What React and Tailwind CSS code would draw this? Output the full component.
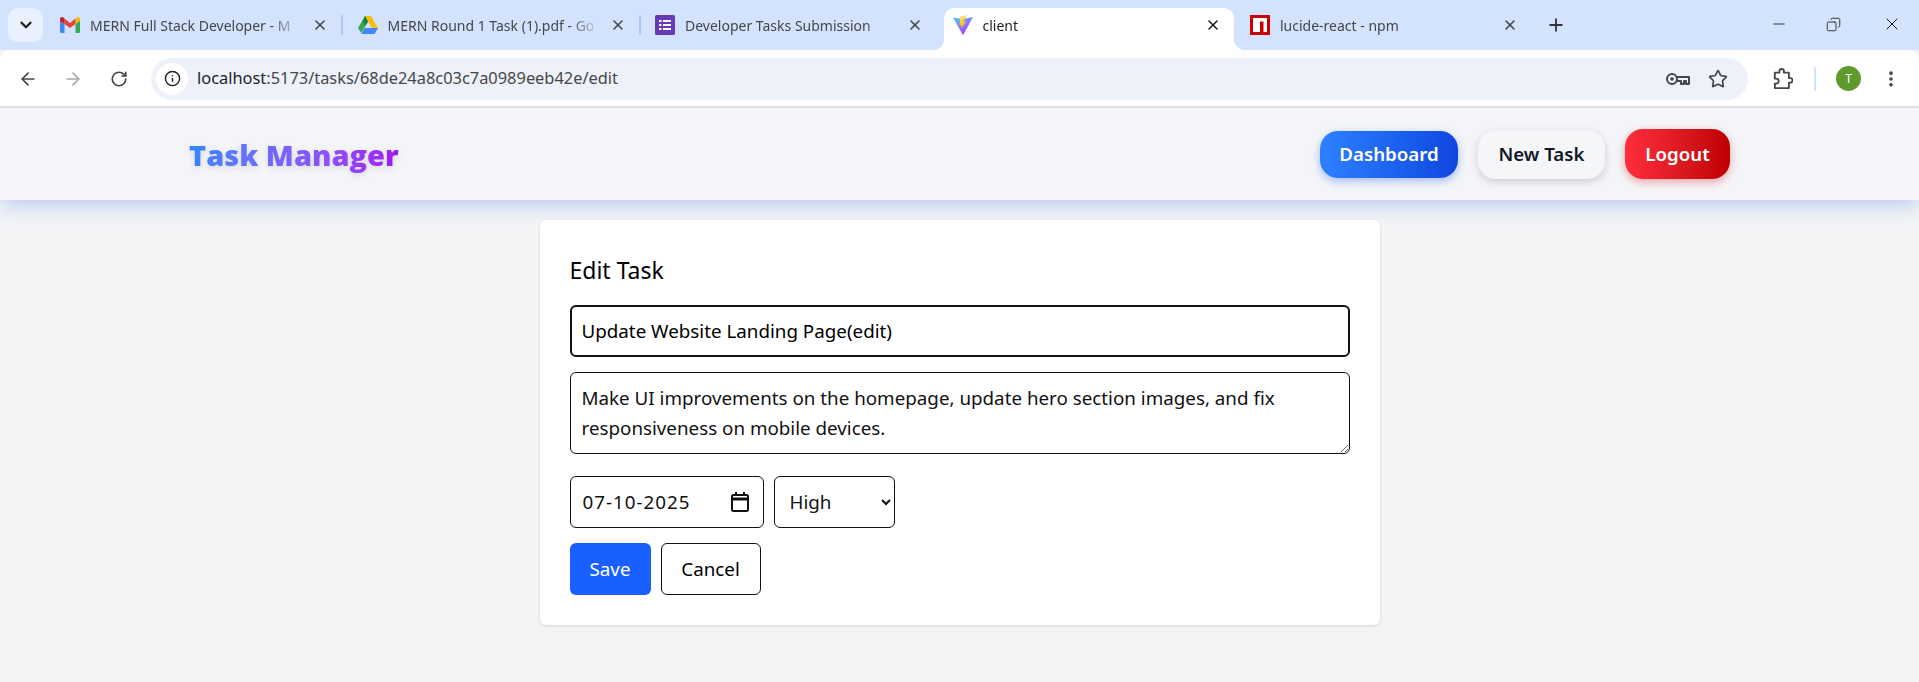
import React from 'react';
import { ArrowLeft, ArrowRight, RotateCw, Info, Star, EllipsisVertical, ChevronDown, X, Plus, Minus, Copy } from 'lucide-react';

const GmailIcon = () => (
  <svg width="20" height="16" viewBox="0 0 20 16">
    <path d="M0 3v11.5A1.5 1.5 0 0 0 1.500 16H4.500V7z" fill="#4285f4" />
    <path d="M20 3v11.5a1.500 1.500 0 0 1-1.500 1.500h-3V7z" fill="#34a853" />
    <path d="M15.500 1.500V7L20 3.800V2c0-1.700-2-2.700-3.300-1.600z" fill="#fbbc04" />
    <path d="M4.500 7V1.500L10 6l5.500-4.500V7L10 11z" fill="#ea4335" />
    <path d="M0 2v1.800L4.500 7V1.500L3.300.4C2 -.7 0 .3 0 2z" fill="#c5221f" />
  </svg>
);

const DriveIcon = () => (
  <svg width="20" height="18" viewBox="0 0 20 18">
    <path d="M7 0h6l7 12h-6z" fill="#fbbc04" />
    <path d="M7 0l3 5.500L3.300 17 0 12z" fill="#34a853" />
    <path d="M6.500 12H20l-3 5.300a1.500 1.500 0 0 1-1 .7H3.300z" fill="#4285f4" />
    <path d="M7 0l3 5.500L7.500 9.800 5 5z" fill="#188038" />
  </svg>
);

const FormsIcon = () => (
  <svg width="20" height="20" viewBox="0 0 20 20">
    <rect width="20" height="20" rx="1.500" fill="#673ab7" />
    <g fill="#fff">
      <rect x="4" y="5" width="2.500" height="2" />
      <rect x="8" y="5" width="8" height="2" />
      <rect x="4" y="9" width="2.500" height="2" />
      <rect x="8" y="9" width="8" height="2" />
      <rect x="4" y="13" width="2.500" height="2" />
      <rect x="8" y="13" width="8" height="2" />
    </g>
  </svg>
);

const ViteIcon = () => (
  <svg width="20" height="20" viewBox="0 0 20 20">
    <defs>
      <linearGradient id="viteA" x1="0" y1="0" x2="0.7" y2="1">
        <stop offset="0" stopColor="#41d1ff" />
        <stop offset="1" stopColor="#bd34fe" />
      </linearGradient>
      <linearGradient id="viteB" x1="0.3" y1="0" x2="0.5" y2="1">
        <stop offset="0" stopColor="#ffea83" />
        <stop offset="1" stopColor="#ffa800" />
      </linearGradient>
    </defs>
    <path d="M0 2.500l10 1.500 10-2L10.500 19.500a.6.6 0 0 1-1 0z" fill="url(#viteA)" />
    <path d="M14 0L7 1.400 6.500 10l2.200.5-.5 3L13 7l-2.500-.5z" fill="url(#viteB)" />
  </svg>
);

const NpmIcon = () => (
  <svg width="20" height="20" viewBox="0 0 20 20">
    <rect width="20" height="20" fill="#cb0000" />
    <path d="M3 3h14v14h-3.500V6.500H10V17H3z" fill="#fff" />
  </svg>
);

const KeyIcon = () => (
  <svg width="24" height="14" viewBox="0 0 24 14" fill="none" stroke="#44474a" strokeWidth="2">
    <circle cx="6" cy="7" r="5" />
    <circle cx="6" cy="7" r="1.300" fill="#44474a" strokeWidth="1" />
    <path d="M11 5h12v7h-3V9h-2v3h-3V9h-4" strokeLinejoin="round" />
  </svg>
);

const ExtensionIcon = () => (
  <svg width="20" height="22" viewBox="0 0 22 24" fill="none" stroke="#44474a" strokeWidth="2" strokeLinejoin="round">
    <path d="M2 5h5V3.500a2.500 2.500 0 0 1 5 0V5h5.500v6H19a2.500 2.500 0 0 1 0 5h-1.500v6H2v-5h1.500a2.700 2.700 0 0 0 0-5.500H2z" />
  </svg>
);

const tabs = [
  { title: 'MERN Full Stack Developer - M', icon: <GmailIcon /> },
  { title: 'MERN Round 1 Task (1).pdf - Go', icon: <DriveIcon /> },
  { title: 'Developer Tasks Submission', icon: <FormsIcon /> },
  { title: 'client', icon: <ViteIcon />, active: true },
  { title: 'lucide-react - npm', icon: <NpmIcon /> },
];

const Tab = ({ tab, last }) => (
  <div className="relative flex h-[42px] w-[297.5px] shrink-0 items-center">
    <div className={`relative flex h-full w-[290px] items-center rounded-t-[10px] pb-[8px] pl-[9px] pr-[13px] ${tab.active ? 'bg-white' : ''}`}>
      <span className="flex w-[20px] shrink-0 justify-center">{tab.icon}</span>
      <span className={`ml-[10px] min-w-0 flex-1 overflow-hidden whitespace-nowrap text-[14px] [mask-image:linear-gradient(to_right,black_85%,transparent)] ${tab.active ? 'text-[#1f1f1f]' : 'text-[#44474a]'}`}>
        {tab.title}
      </span>
      <X size={16} strokeWidth={2.4} className={`ml-[10px] shrink-0 ${tab.active ? 'text-[#1f1f1f]' : 'text-[#44474a]'}`} />
      {tab.active && (
        <>
          <span className="absolute bottom-0 left-[-10px] h-[10px] w-[10px] bg-[radial-gradient(circle_at_0_0,transparent_9.500px,white_10px)]" />
          <span className="absolute bottom-0 right-[-10px] h-[10px] w-[10px] bg-[radial-gradient(circle_at_100%_0,transparent_9.500px,white_10px)]" />
        </>
      )}
    </div>
    {!last && !tab.active && tab.title !== 'Developer Tasks Submission' && (
      <span className="mb-[8px] h-[20px] w-[2px] rounded bg-[#a8c7fa]" />
    )}
  </div>
);

const NavButton = ({ className, children }) => (
  <button className={`rounded-[18px] text-[18.700px] font-semibold ${className}`}>{children}</button>
);

const fieldClass = 'rounded-[6px] border border-[#111] bg-white text-[18.800px] text-[#111]';

export default function App() {
  return (
    <div className="h-[682px] overflow-hidden bg-[#f3f4f6] font-['Noto_Sans',sans-serif]">
      {/* browser tabs */}
      <div className="flex h-[50px] items-start bg-[#d3e3fd] pt-[8px]">
        <div className="ml-[8px] flex h-[34px] w-[35px] items-center justify-center rounded-[10px] bg-[#e9f0fe]">
          <ChevronDown size={18} strokeWidth={3} className="text-[#1f1f1f]" />
        </div>
        <div className="ml-[8px] flex">
          {tabs.map((tab, i) => (
            <Tab key={tab.title} tab={tab} last={i === tabs.length - 1} />
          ))}
        </div>
        <Plus size={20} strokeWidth={2.2} className="ml-[7px] mt-[7px] text-[#303336]" />
        <div className="ml-auto flex items-center pr-[17px] pt-[6px] text-[#1f1f1f]">
          <Minus size={18} strokeWidth={1.2} />
          <Copy size={15} strokeWidth={1.4} className="ml-[38px] -scale-x-100" />
          <X size={20} strokeWidth={1.2} className="ml-[41px]" />
        </div>
      </div>

      {/* toolbar */}
      <div className="relative z-10 flex h-[58px] items-center rounded-t-[10px] border-b-2 border-[#dfe1e5] bg-white pt-[1px] text-[#44474a]">
        <ArrowLeft size={20} strokeWidth={2} className="ml-[18px]" />
        <ArrowRight size={20} strokeWidth={2} className="ml-[25px] text-[#a8a8a8]" />
        <RotateCw size={18} strokeWidth={2.2} className="ml-[27px]" />
        <div className="ml-[23px] flex h-[42px] w-[1597px] items-center rounded-full bg-[#ecf1fa] pl-[5px] pr-[20px]">
          <span className="flex h-[32px] w-[32px] items-center justify-center rounded-full bg-white">
            <Info size={17} strokeWidth={2} className="text-[#1f1f1f]" />
          </span>
          <span className="ml-[9px] text-[16.400px] text-[#1f1f1f]">
            localhost<span className="text-[#474747]">:5173/tasks/68de24a8c03c7a0989eeb42e/edit</span>
          </span>
          <span className="ml-auto"><KeyIcon /></span>
          <Star size={20} strokeWidth={2} className="ml-[18px]" />
        </div>
        <span className="ml-[25px]"><ExtensionIcon /></span>
        <span className="ml-[21px] h-[24px] w-[2px] rounded bg-[#d3e3fd]" />
        <span className="ml-[20px] flex h-[25px] w-[25px] items-center justify-center rounded-full bg-[#5e9a2e] text-[12px] text-white">T</span>
        <EllipsisVertical size={20} strokeWidth={2.4} className="ml-[20px]" />
      </div>

      {/* app navbar */}
      <nav className="flex h-[92px] items-center justify-between bg-[#f4f5f8] px-[189px] shadow-[0_4px_20px_rgba(37,99,235,0.3)]">
        <h1 className="mt-[2px] bg-linear-to-r from-[#2f86ff] to-[#a211f5] bg-clip-text font-['Open_Sans',sans-serif] text-[29px] font-extrabold text-transparent drop-shadow-[0_2px_3px_rgba(0,0,0,0.12)]">
          Task Manager
        </h1>
        <div className="flex items-center gap-[20px]">
          <NavButton className="h-[47px] w-[138px] bg-linear-to-r from-[#2f80ff] to-[#1146e0] text-white shadow-[0_3px_8px_rgba(37,99,235,0.4)]">
            Dashboard
          </NavButton>
          <NavButton className="h-[49px] w-[127px] bg-[#f5f6f8] text-[#111827] shadow-[0_3px_8px_rgba(0,0,0,0.16)]">
            New Task
          </NavButton>
          <NavButton className="h-[50px] w-[105px] bg-linear-to-r from-[#ff2d3c] to-[#bd0000] text-white shadow-[0_3px_8px_rgba(220,38,38,0.4)]">
            Logout
          </NavButton>
        </div>
      </nav>

      {/* edit form */}
      <main className="mx-auto mt-[20px] w-[840px] rounded-[6px] bg-white p-[30px] shadow-[0_1px_3px_rgba(0,0,0,0.12)]">
        <h2 className="text-[23px] leading-[40px] text-black">Edit Task</h2>
        <input
          readOnly
          value="Update Website Landing Page(edit)"
          className="mt-[15px] block h-[52px] w-full rounded-[6px] border-2 border-[#111] bg-white px-[10px] text-[18.800px] text-black outline-none"
        />
        <textarea
          readOnly
          value="Make UI improvements on the homepage, update hero section images, and fix responsiveness on mobile devices."
          className={`${fieldClass} mt-[15px] block h-[82px] w-full px-[11px] py-[10px] leading-[30px] outline-none`}
        />
        <div className="mt-[22px] flex gap-[10px]">
          <div className={`${fieldClass} flex h-[52px] w-[194px] items-center justify-between pl-[12px] pr-[14px]`}>
            <span className="tracking-[1px]">07-10-2025</span>
            <svg width="18" height="20" viewBox="0 0 18 20" fill="none" stroke="#111" strokeWidth="2">
              <rect x="1" y="3" width="16" height="16" rx="1.500" />
              <path d="M1 7h16" strokeWidth="3" />
              <path d="M5 0v4M13 0v4" />
            </svg>
          </div>
          <select defaultValue="High" className={`${fieldClass} h-[52px] w-[121px] pl-[11px] outline-none`}>
            <option>Low</option>
            <option>Medium</option>
            <option>High</option>
          </select>
        </div>
        <div className="mt-[15px] flex gap-[10px]">
          <button className="h-[52px] w-[81px] rounded-[6px] bg-[#1a5fff] text-[18.800px] text-white">Save</button>
          <button className={`${fieldClass} h-[52px] w-[100px] text-black`}>Cancel</button>
        </div>
      </main>
    </div>
  );
}
